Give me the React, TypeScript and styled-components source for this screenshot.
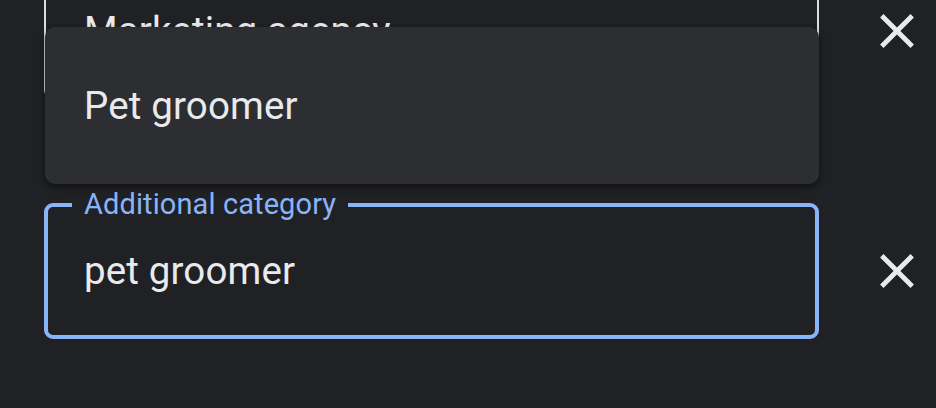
import React from "react";
import styled, { createGlobalStyle } from "styled-components";

const Global = createGlobalStyle`
  html, body {
    margin: 0;
    padding: 0;
    background: #202124;
    overflow: hidden;
  }
  body {
    font-family: Roboto, "Noto Sans", Arial, sans-serif;
    color: #e8eaed;
  }
`;

const Page = styled.div`
  width: 936px;
  height: 408px;
  overflow: hidden;
  background: #202124;
`;

const List = styled.div`
  display: flex;
  flex-direction: column;
  gap: 104px;
  margin-top: -37px;
  padding-left: 44px;
`;

const Row = styled.div`
  display: flex;
  align-items: center;
  gap: 49px;
`;

const Field = styled.div<{ $focused?: boolean }>`
  position: relative;
  box-sizing: border-box;
  width: 775px;
  height: 136px;
  border: ${(p) => (p.$focused ? "4px solid #8ab4f8" : "2px solid #dadce0")};
  border-radius: 9px;
  display: flex;
  align-items: center;
  padding-left: ${(p) => (p.$focused ? "36px" : "38px")};
`;

const Value = styled.span`
  font-size: 38.5px;
  line-height: 1;
  color: #e8eaed;
  letter-spacing: 0.15px;
`;

const Label = styled.span`
  position: absolute;
  top: -21px;
  left: 24px;
  padding: 0 12px;
  background: #202124;
  color: #8ab4f8;
  font-size: 29px;
  line-height: 36px;
  letter-spacing: 0.1px;
`;

const Menu = styled.div`
  position: absolute;
  left: -3px;
  right: -4px;
  bottom: calc(100% + 23px);
  box-sizing: border-box;
  padding: 20px 0;
  background: #2d2e31;
  border-radius: 10px;
  box-shadow: 0 2px 4px rgba(0, 0, 0, 0.35), 0 4px 10px rgba(0, 0, 0, 0.2);
  z-index: 2;
`;

const Option = styled.div`
  height: 117px;
  display: flex;
  align-items: center;
  padding-left: 39px;
  font-size: 38.5px;
  color: #e8eaed;
  letter-spacing: 0.15px;
`;

const CloseButton = styled.button`
  width: 58px;
  height: 58px;
  padding: 0;
  border: none;
  background: transparent;
  display: flex;
  align-items: center;
  justify-content: center;
  cursor: pointer;
`;

const CloseIcon = () => (
  <svg width="58" height="58" viewBox="0 0 24 24" fill="#e8eaed">
    <path d="M19 6.41L17.59 5 12 10.59 6.41 5 5 6.41 10.59 12 5 17.59 6.41 19 12 13.41 17.59 19 19 17.59 13.41 12z" />
  </svg>
);

export default function App() {
  return (
    <Page>
      <Global />
      <List>
        <Row>
          <Field>
            <Value>Marketing agency</Value>
          </Field>
          <CloseButton aria-label="Remove">
            <CloseIcon />
          </CloseButton>
        </Row>
        <Row>
          <Field $focused>
            <Label>Additional category</Label>
            <Value>pet groomer</Value>
            <Menu>
              <Option>Pet groomer</Option>
            </Menu>
          </Field>
          <CloseButton aria-label="Remove">
            <CloseIcon />
          </CloseButton>
        </Row>
      </List>
    </Page>
  );
}
